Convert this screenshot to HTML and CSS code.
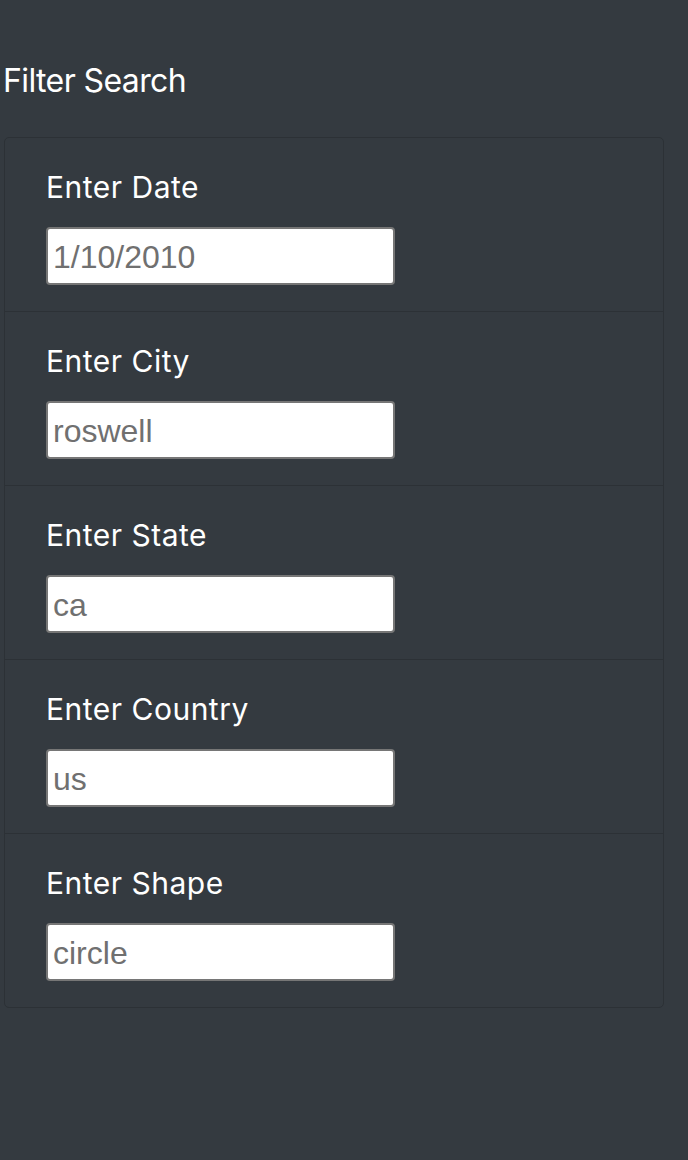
FILE: index.html
```html
<!DOCTYPE html>
<html lang="en">
<head>
<meta charset="utf-8">
<title>Filter Search</title>
<link rel="stylesheet" href="styles.css">
</head>
<body>
  <div class="page">
    <h5 class="title">Filter Search</h5>
    <ul class="list-group">
      <li class="list-item">
        <label class="field-label" for="date">Enter Date</label>
        <input class="field-input" id="date" type="text" value="1/10/2010">
      </li>
      <li class="list-item">
        <label class="field-label" for="city">Enter City</label>
        <input class="field-input" id="city" type="text" value="roswell">
      </li>
      <li class="list-item">
        <label class="field-label" for="state">Enter State</label>
        <input class="field-input" id="state" type="text" value="ca">
      </li>
      <li class="list-item">
        <label class="field-label" for="country">Enter Country</label>
        <input class="field-input" id="country" type="text" value="us">
      </li>
      <li class="list-item">
        <label class="field-label" for="shape">Enter Shape</label>
        <input class="field-input" id="shape" type="text" value="circle">
      </li>
    </ul>
  </div>
</body>
</html>
```

FILE: styles.css
```css
html, body {
  margin: 0;
  padding: 0;
  background: #343a40;
  min-height: 100%;
}

body {
  font-family: Inter, "Noto Sans", sans-serif;
  color: #ffffff;
}

.page {
  padding: 62px 0 0 0;
}

.title {
  margin: 0 0 37px 0;
  padding-left: 3px;
  font-size: 32px;
  line-height: 38px;
  font-weight: 400;
  letter-spacing: -0.6px;
  color: #ffffff;
}

.list-group {
  list-style: none;
  margin: 0 0 0 4px;
  padding: 0;
  width: 660px;
  box-sizing: border-box;
  border: 1px solid #2c3136;
  border-radius: 5px;
}

.list-item {
  display: flex;
  flex-direction: column;
  align-items: flex-start;
  padding: 31px 0 26px 41px;
  border-bottom: 1px solid #2c3136;
}

.list-item:last-child {
  border-bottom: none;
}

.field-label {
  display: block;
  font-size: 30px;
  line-height: 36px;
  font-weight: 400;
  letter-spacing: 0.5px;
  color: #ffffff;
  margin-bottom: 22px;
}

.field-input {
  box-sizing: border-box;
  width: 349px;
  height: 58px;
  margin: 0;
  padding: 2px 5px 0 5px;
  border: 2px solid #767676;
  border-radius: 4px;
  background: #ffffff;
  font-family: "Liberation Sans", Arial, sans-serif;
  font-size: 32px;
  color: #707070;
  outline: none;
}
```
